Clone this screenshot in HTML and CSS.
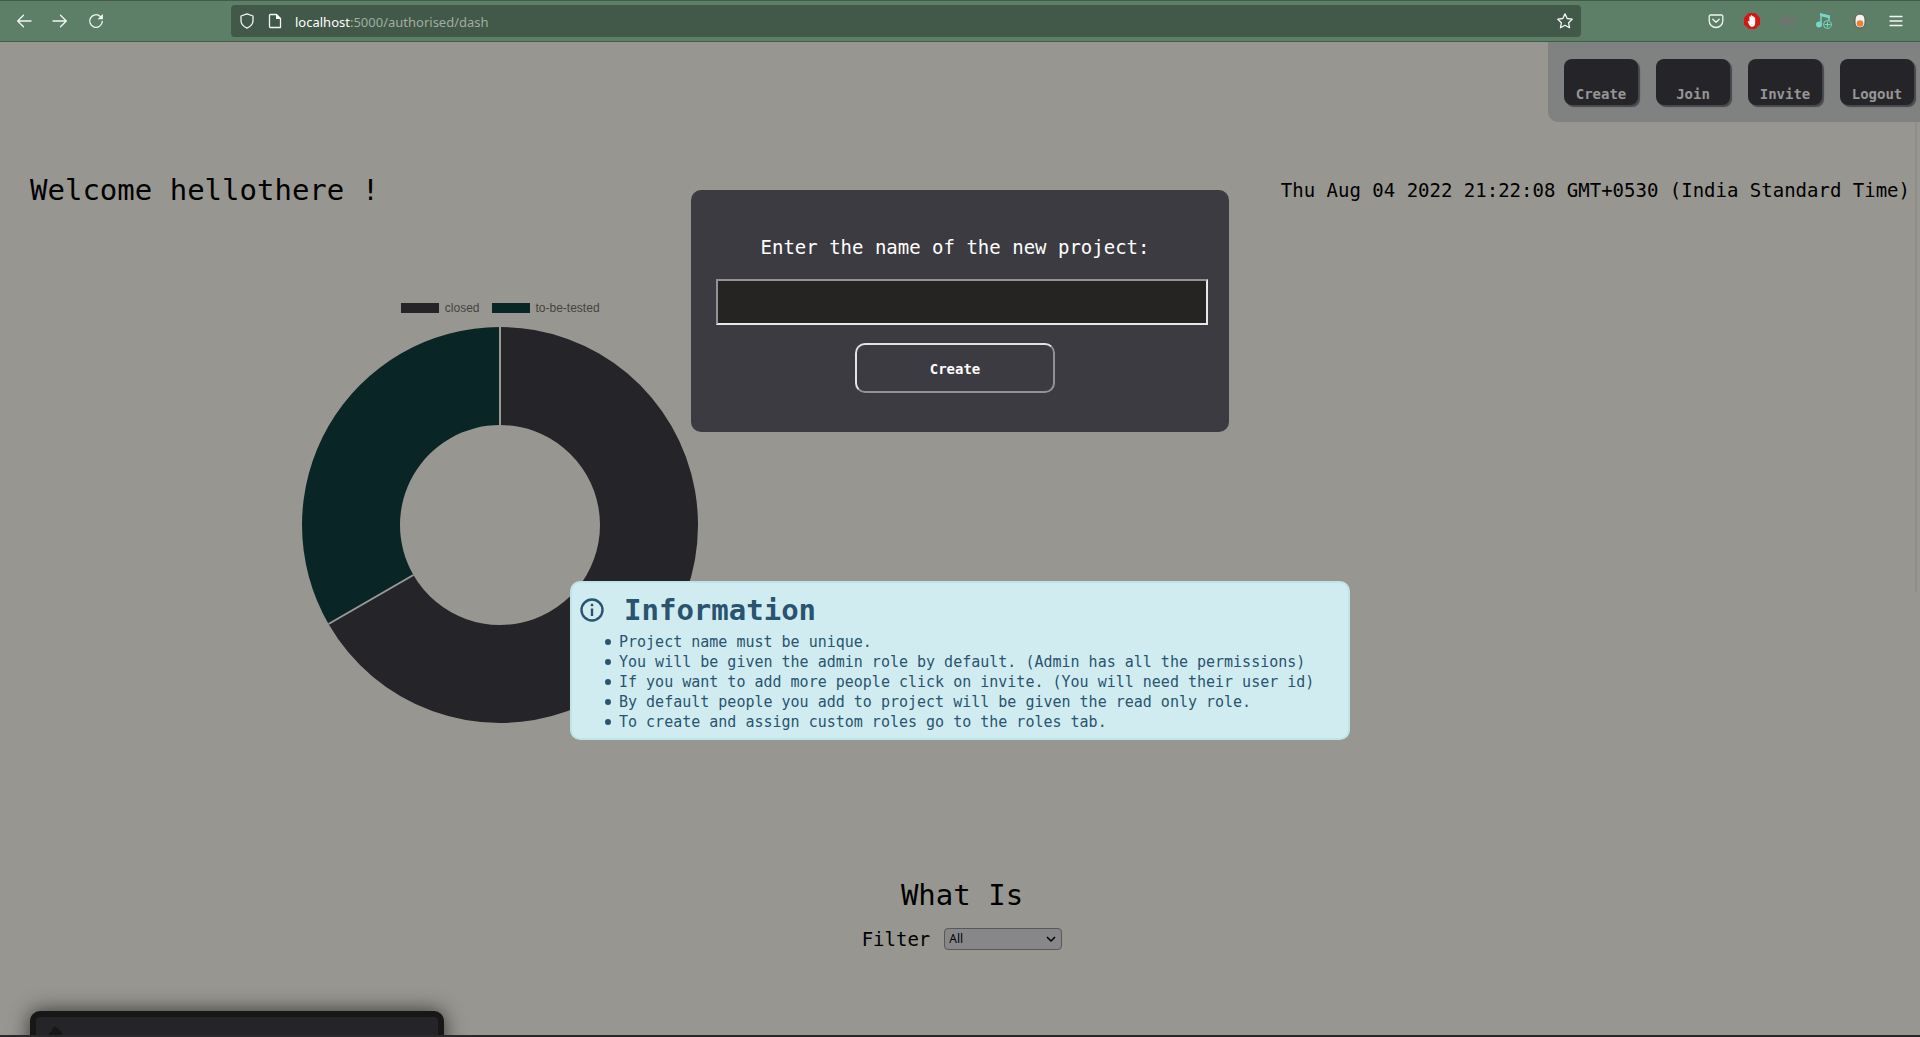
FILE: index.html
```html
<!DOCTYPE html>
<html lang="en">
<head>
<meta charset="utf-8">
<title>Dashboard</title>
<link rel="stylesheet" href="styles.css">
</head>
<body>
<header class="browser">
  <div class="browser-nav">
    <button class="icon-btn" aria-label="Back"><svg viewBox="0 0 16 16"><path d="M15 8H2M7.500 2.200 1.700 8l5.800 5.800"/></svg></button>
    <button class="icon-btn" aria-label="Forward"><svg viewBox="0 0 16 16"><path d="M1 8h13M8.500 2.200 14.300 8l-5.800 5.800"/></svg></button>
    <button class="icon-btn" aria-label="Reload"><svg viewBox="0 0 16 16"><path d="M14.300 8.500A6.300 6.300 0 1 1 12.300 3.400"/><path class="solid" d="M14.800 1v5.200H9.600z"/></svg></button>
  </div>
  <div class="address">
    <svg viewBox="0 0 16 16"><path d="M8 .8 14 3v4.500c0 3.500-2.500 6-6 7.700-3.500-1.700-6-4.200-6-7.700V3z"/></svg>
    <svg class="page-icon" viewBox="0 0 16 16"><path d="M3.500 1.500h6l4 4v9h-10a1 1 0 0 1-1-1v-11a1 1 0 0 1 1-1z"/><path class="solid" d="M9 1l5 5H9z"/></svg>
    <span class="url"><b>localhost</b>:5000/authorised/dash</span>
    <svg class="star" viewBox="0 0 16 16"><path d="m8 .9 2.200 4.600 5 .7-3.600 3.500.9 5L8 12.300l-4.500 2.400.9-5L.8 6.200l5-.7z"/></svg>
  </div>
  <div class="browser-tools">
    <button class="icon-btn" aria-label="Pocket"><svg viewBox="0 0 16 16"><path d="M2.500 2h11a1.300 1.300 0 0 1 1.300 1.300v4.400a6.800 6.800 0 0 1-13.600 0V3.300A1.300 1.300 0 0 1 2.500 2zM4.800 6.200 8 9.200l3.200-3"/></svg></button>
    <button class="icon-btn" aria-label="Blocker"><svg viewBox="0 0 16 16"><path class="red" d="M4.700 0h6.600L16 4.700v6.600L11.300 16H4.700L0 11.300V4.700z"/><path class="solid" d="M3.700 8.200c.7-.5 1.300 0 1.700.7V4c0-1 1.200-1 1.300 0V3c.1-1 1.400-1 1.500 0v.6c.2-.9 1.400-.8 1.500.2v1c.3-.8 1.500-.6 1.500.4v4.500c0 2.500-1.200 4-3.100 4-2.400 0-3.500-2.700-4.400-5.500z"/></svg></button>
    <button class="icon-btn" aria-label="Volume"><svg viewBox="0 0 16 16"><path class="mute" d="M0 5.500h3L7.500 1.500v13L3 10.500H0z"/><path class="mute-line" d="M9.500 5.500a3 3 0 0 1 0 5M10.500 2a6.300 6.300 0 0 1 0 12"/></svg></button>
    <button class="icon-btn" aria-label="Music"><svg viewBox="0 0 16 16"><path class="teal-line" d="M5 12V1.500l8 2V7"/><path class="teal" d="M4 0l10 2.500v3L4 3z"/><circle class="teal" cx="3" cy="11.500" r="3"/><circle class="teal-ring" cx="11.500" cy="11.500" r="4"/><path class="teal-ring" d="M11.500 9v5M9 11.500h5"/></svg></button>
    <button class="icon-btn" aria-label="Switch"><svg viewBox="0 0 16 16"><rect class="pill" x="3" y="1" width="10" height="14" rx="5"/><circle class="orange" cx="8" cy="10.500" r="3.300"/></svg></button>
    <button class="icon-btn" aria-label="Menu"><svg viewBox="0 0 16 16"><path d="M2 3.500h12M2 8h12M2 12.500h12"/></svg></button>
  </div>
</header>

<main class="page">
  <nav class="actions">
    <button>Create</button><button>Join</button><button>Invite</button><button>Logout</button>
  </nav>
  <div class="side-line"></div>

  <section class="greeting">
    <h1>Welcome hellothere !</h1>
    <time>Thu Aug 04 2022 21:22:08 GMT+0530 (India Standard Time)</time>
  </section>

  <section class="chart">
    <div class="legend">
      <span class="key closed"></span><span>closed</span>
      <span class="key tested"></span><span>to-be-tested</span>
    </div>
    <svg class="donut" viewBox="-198 -198 396 396">
      <path class="slice-closed" d="M0-198A198 198 0 1 1-171.470 99L-86.600 50A100 100 0 1 0 0-100z"/>
      <path class="slice-tested" d="M-171.470 99A198 198 0 0 1 0-198V-100A100 100 0 0 0-86.600 50z"/>
      <path class="slice-gap" d="M0-198v98M-171.470 99-86.600 50"/>
    </svg>
  </section>

  <section class="what">
    <h2>What Is</h2>
    <div class="filter">
      <label for="filter">Filter</label>
      <span class="select-wrap">
        <select id="filter"><option>All</option></select>
        <svg viewBox="0 0 10 10"><path d="m1 3 4 4 4-4"/></svg>
      </span>
    </div>
  </section>

  <article class="card">
    <svg viewBox="0 0 16 16"><path d="M1 16V9c0-2 3-2 3-4 0-1 1-2 3-4 1 2 6 3 7 8l1 7z"/></svg>
  </article>

  <form class="modal">
    <label for="project">Enter the name of the new project:</label>
    <input id="project" type="text">
    <button type="button">Create</button>
  </form>

  <aside class="info">
    <h2><svg viewBox="0 0 24 24"><circle cx="12" cy="12" r="10.500"/><path d="M12 10.500V18M12 5.800v2.400"/></svg>Information</h2>
    <ul>
      <li>Project name must be unique.</li>
      <li>You will be given the admin role by default. (Admin has all the permissions)</li>
      <li>If you want to add more people click on invite. (You will need their user id)</li>
      <li>By default people you add to project will be given the read only role.</li>
      <li>To create and assign custom roles go to the roles tab.</li>
    </ul>
  </aside>
</main>
</body>
</html>
```
FILE: styles.css
```css
* { box-sizing: border-box; }

body {
  margin: 0;
  height: 100vh;
  display: flex;
  flex-direction: column;
  overflow: hidden;
  background: #989691;
  color: #000;
  font-family: "DejaVu Sans Mono", monospace;
}

h1, h2, ul { margin: 0; padding: 0; font-weight: 400; }
button, input, select { font: inherit; margin: 0; }

/* Browser bar */
.browser {
  flex: none;
  height: 42px;
  display: flex;
  align-items: center;
  padding: 0 16px;
  background: #5e7f67;
  border-top: 1px solid #425c4a;
  border-bottom: 1px solid #425c4a;
}
.browser svg {
  display: block;
  width: 16px;
  height: 16px;
  flex: none;
  fill: none;
  stroke: #f2f6f3;
  stroke-width: 1.300;
  stroke-linecap: round;
  stroke-linejoin: round;
}
.icon-btn { padding: 0; border: 0; background: none; }
.browser-nav { width: 215px; display: flex; gap: 20px; }
.address {
  flex: 1;
  height: 32px;
  display: flex;
  align-items: center;
  gap: 12px;
  padding: 0 8px;
  border-radius: 4px;
  background: #425848;
}
.url {
  flex: 1;
  padding-top: 2px;
  color: #a0aea3;
  font: 13px/20px "Noto Sans", sans-serif;
}
.url b { color: #fff; font-weight: 400; }
.browser-tools {
  width: 323px;
  display: flex;
  justify-content: flex-end;
  gap: 20px;
}
.browser .solid { fill: #fff; stroke: none; }
.browser .red { fill: #d51616; stroke: none; }
.browser .mute { fill: #727272; stroke: none; }
.browser .mute-line { stroke: #727272; stroke-width: 2; }
.browser .teal { fill: #78d6c8; stroke: none; }
.browser .teal-line { stroke: #78d6c8; stroke-width: 1.500; }
.browser .teal-ring { stroke: #78d6c8; stroke-width: 1; }
.browser .pill { fill: #f2f2f2; stroke: #555; stroke-width: 1; }
.browser .orange { fill: #ea8232; stroke: none; }

/* Page */
.page {
  position: relative;
  flex: 1;
  overflow: hidden;
  display: flex;
  flex-direction: column;
  border-bottom: 2px solid #2b292b;
}
.actions {
  flex: none;
  align-self: flex-end;
  display: flex;
  gap: 18px;
  padding: 17px 6px 17px 16px;
  border-radius: 0 0 0 10px;
  background: #7f8280;
}
.actions button {
  width: 74px;
  height: 46px;
  padding: 24px 0 0;
  border: 0;
  border-radius: 8px;
  background: #252428;
  color: #969696;
  font-size: 14px;
  font-weight: 700;
  line-height: 20px;
  box-shadow: 2px 2px 1px #48484b;
}
.side-line {
  position: absolute;
  top: 80px;
  right: 3px;
  width: 2px;
  height: 470px;
  background: #8f8d88;
}
.greeting {
  flex: none;
  display: flex;
  justify-content: space-between;
  align-items: center;
  padding: 48px 10px 0 30px;
}
.greeting h1, .what h2 { font-size: 29px; line-height: 40px; }
.greeting time, .filter label { font-size: 19px; line-height: 28px; }

.chart {
  flex: none;
  width: 52%;
  display: flex;
  flex-direction: column;
  align-items: center;
  padding: 88px 0 0 2px;
}
.legend {
  display: flex;
  align-items: center;
  gap: 6px;
  height: 20px;
  margin-bottom: 9px;
  color: #454442;
  font: 12px/20px "Liberation Sans", Arial, sans-serif;
}
.key { width: 38px; height: 10px; }
.closed { background: #252428; }
.tested { background: #092526; margin-left: 6px; }
.donut { width: 396px; height: 396px; }
.slice-closed { fill: #252428; }
.slice-tested { fill: #092526; }
.slice-gap { stroke: #989a98; stroke-width: 2; }

.what {
  flex: none;
  display: flex;
  flex-direction: column;
  align-items: center;
  gap: 10px;
  padding: 152px 0 0 4px;
}
.filter { display: flex; align-items: center; gap: 14px; }
.select-wrap { position: relative; display: flex; }
.select-wrap select {
  width: 118px;
  height: 22px;
  padding: 0 4px;
  appearance: none;
  border: 1px solid #58585c;
  border-radius: 4px;
  background: #87878a;
  color: #000;
  font: 12px/20px "Noto Sans", sans-serif;
}
.select-wrap svg {
  position: absolute;
  right: 6px;
  top: 6px;
  width: 10px;
  height: 10px;
  fill: none;
  stroke: #000;
  stroke-width: 1.500;
  pointer-events: none;
}

.card {
  flex: none;
  width: 414px;
  height: 220px;
  margin: 58px 0 0 30px;
  padding: 8px 12px;
  border: 6px solid #171716;
  border-radius: 10px;
  background: #252428;
  box-shadow: 0 0 20px #333;
}
.card svg { width: 16px; height: 16px; fill: #171716; }

/* Dialog for a new project */
.modal {
  position: absolute;
  top: 148px;
  left: 50%;
  width: 538px;
  transform: translateX(-50%);
  display: flex;
  flex-direction: column;
  align-items: center;
  padding: 43px 21px 39px 25px;
  border-radius: 10px;
  background: #3d3b42;
  color: #fff;
}
.modal label {
  margin-right: 14px;
  font-size: 19px;
  line-height: 28px;
}
.modal input {
  width: 100%;
  height: 46px;
  margin: 18px 0;
  padding: 0 8px;
  border: 2px solid;
  border-color: #929196 #e8e8ea #e8e8ea #929196;
  background: #252422;
  color: #fff;
}
.modal button {
  width: 200px;
  height: 50px;
  margin-right: 14px;
  padding: 2px 0 0;
  border: 2px solid;
  border-color: #e3e3e6 #929196 #929196 #e3e3e6;
  border-radius: 10px;
  background: #3d3b42;
  color: #fff;
  font-size: 14px;
  font-weight: 700;
}

/* Information panel */
.info {
  position: absolute;
  top: 539px;
  left: 50%;
  width: 780px;
  transform: translateX(-50%);
  padding: 7px 8px 6px;
  border: 2px solid #bee3e8;
  border-radius: 10px;
  background: #d1ecf1;
  color: #28546f;
}
.info h2 {
  display: flex;
  align-items: center;
  gap: 20px;
  font-size: 29px;
  font-weight: 700;
  line-height: 40px;
}
.info h2 svg {
  width: 24px;
  height: 24px;
  fill: none;
  stroke: #28546f;
  stroke-width: 2.400;
}
.info ul {
  padding: 2px 0 0 39px;
  font-size: 15px;
  line-height: 20px;
  list-style: none;
}
.info li { display: flex; align-items: center; white-space: nowrap; }
.info li::before {
  content: "";
  width: 6px;
  height: 6px;
  margin: 0 8px 0 -14px;
  border-radius: 50%;
  background: #28546f;
}
```
